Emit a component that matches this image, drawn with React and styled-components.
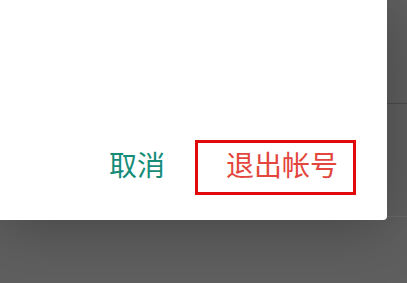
import React from "react";
import styled, { createGlobalStyle } from "styled-components";

const Global = createGlobalStyle`
  html, body { margin: 0; padding: 0; }
  body { background: #5f5f5f; font-family: "Noto Sans CJK SC", "Noto Sans", sans-serif; }
`;

const Stage = styled.div`
  position: relative;
  width: 407px;
  height: 283px;
  overflow: hidden;
  background: #5f5f5f;
`;

const Page = styled.div`
  display: flex;
  flex-direction: column;
  height: 100%;
`;

const PageRow = styled.div`
  height: ${(p) => p.$h}px;
  flex: ${(p) => (p.$h ? "none" : "1")};
  border-bottom: ${(p) => (p.$line ? `1px solid ${p.$line}` : "none")};
`;

const Dialog = styled.div`
  position: absolute;
  left: 0;
  top: 0;
  width: 387px;
  height: 220px;
  background: #ffffff;
  border-radius: 0 0 4px 0;
  box-shadow: 0 6px 60px rgba(0, 0, 0, 0.28);
  display: flex;
  flex-direction: column;
  justify-content: flex-end;
`;

const Actions = styled.div`
  display: flex;
  justify-content: flex-end;
  align-items: center;
  gap: 30px;
  padding: 0 31px 25px 0;
`;

const ActionButton = styled.button`
  box-sizing: border-box;
  height: 55px;
  display: flex;
  align-items: center;
  background: none;
  margin: 0;
  font-family: "Noto Sans CJK SC", sans-serif;
  font-size: 28px;
  line-height: 1;
  letter-spacing: 0;
  cursor: pointer;
  color: ${(p) => p.$color};
  border: ${(p) => (p.$outlined ? "3px solid #e00a0a" : "none")};
  padding: ${(p) => (p.$outlined ? "0 15px 7px 28px" : "0 0 7px 0")};
`;

export default function App() {
  return (
    <>
      <Global />
      <Stage>
        <Page>
          <PageRow $h={103} $line="#4d4d4d" />
          <PageRow $h={112} $line="#686868" />
          <PageRow />
        </Page>
        <Dialog>
          <Actions>
            <ActionButton $color="#148c78">取消</ActionButton>
            <ActionButton $color="#e2463c" $outlined>
              退出帐号
            </ActionButton>
          </Actions>
        </Dialog>
      </Stage>
    </>
  );
}
